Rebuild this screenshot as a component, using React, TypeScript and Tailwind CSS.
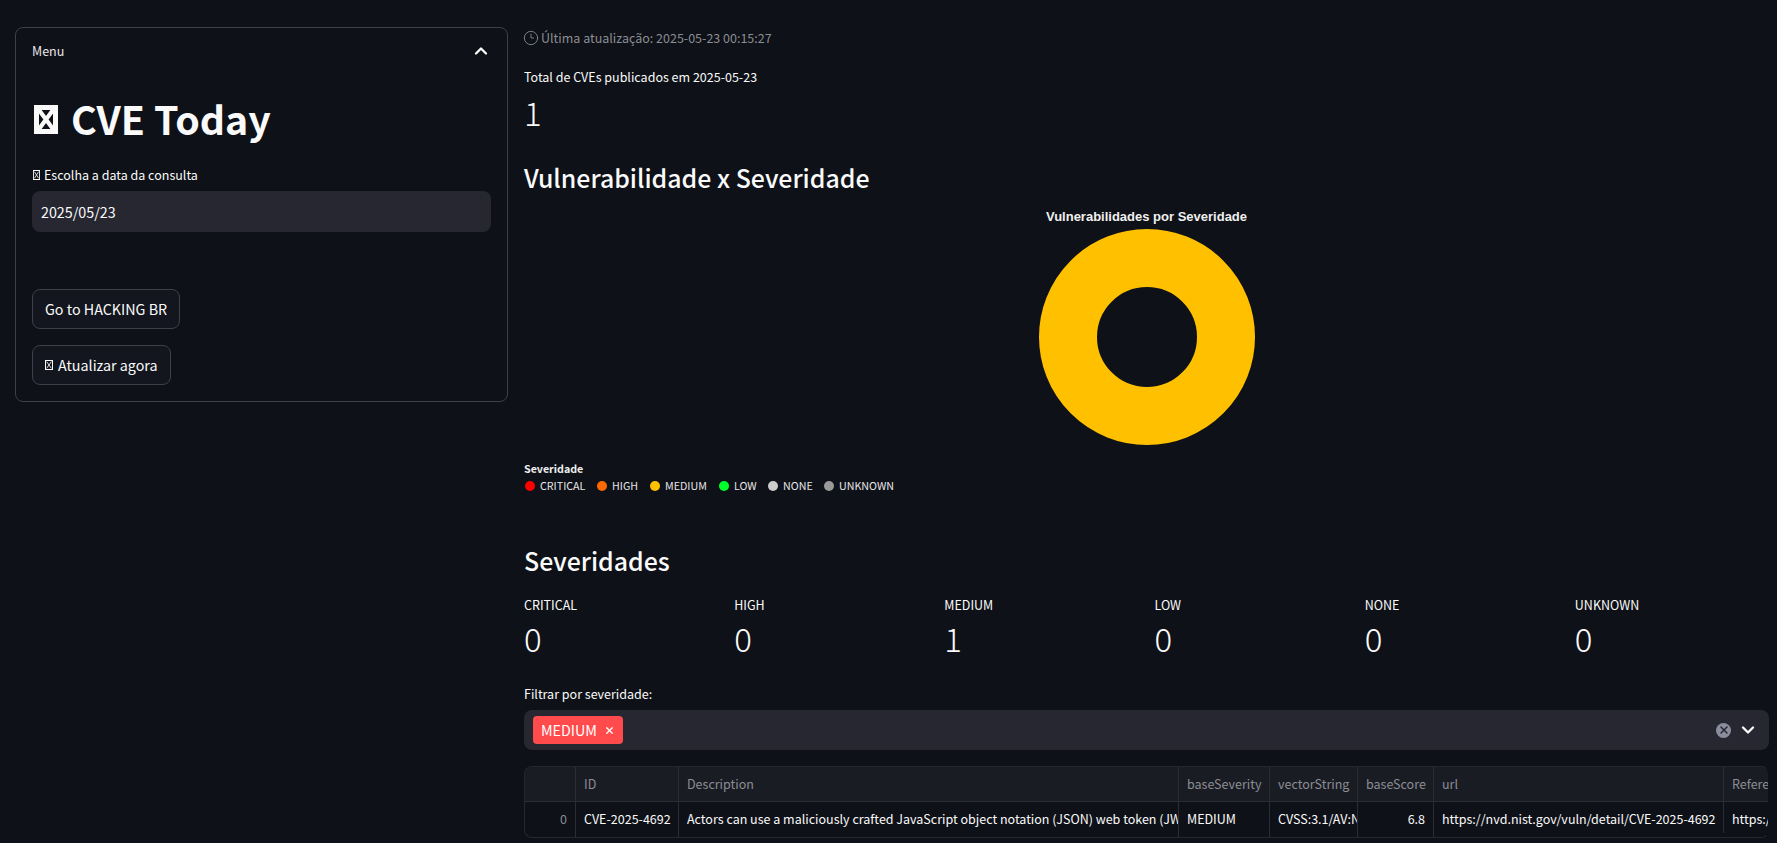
import { ChevronDown, ChevronUp, Clock3, X } from "lucide-react";

const SANS = "font-['Noto_Sans_CJK_SC','Noto_Sans',sans-serif]";

const LEGEND = [
  { label: "CRITICAL", color: "bg-[#ff0000]", width: "w-[72px]" },
  { label: "HIGH", color: "bg-[#ff6a00]", width: "w-[53px]" },
  { label: "MEDIUM", color: "bg-[#ffc000]", width: "w-[69px]" },
  { label: "LOW", color: "bg-[#00ff2a]", width: "w-[49px]" },
  { label: "NONE", color: "bg-[#cccccc]", width: "w-[56px]" },
  { label: "UNKNOWN", color: "bg-[#999999]", width: "w-auto" },
];

const METRICS = [
  { label: "CRITICAL", value: "0" },
  { label: "HIGH", value: "0" },
  { label: "MEDIUM", value: "1" },
  { label: "LOW", value: "0" },
  { label: "NONE", value: "0" },
  { label: "UNKNOWN", value: "0" },
];

const COLUMNS = [
  { head: "", cell: "0", className: "justify-end text-[#8b8d93]" },
  { head: "ID", cell: "CVE-2025-4692", className: "text-[#fafafa]" },
  {
    head: "Description",
    cell: "Actors can use a maliciously crafted JavaScript object notation (JSON) web token (JWT) to",
    className: "text-[#fafafa]",
  },
  { head: "baseSeverity", cell: "MEDIUM", className: "text-[#fafafa]" },
  { head: "vectorString", cell: "CVSS:3.1/AV:N/AC:L/PR:L", className: "text-[#fafafa]" },
  { head: "baseScore", cell: "6.8", className: "justify-end text-[#fafafa]" },
  { head: "url", cell: "https://nvd.nist.gov/vuln/detail/CVE-2025-4692", className: "text-[#fafafa]" },
  { head: "References", cell: "https://nvd.nist.gov/", className: "text-[#fafafa]" },
];

// missing-glyph box: the emoji in the reference did not render
function Tofu({ className, frame }: { className: string; frame: number }) {
  return (
    <svg viewBox="0 0 24 29" preserveAspectRatio="none" className={`inline-block ${className}`} aria-hidden="true">
      <path
        fillRule="evenodd"
        fill="currentColor"
        d={`M0 0H24V29H0Z M${frame} ${frame}V${29 - frame}H${24 - frame}V${frame}Z`}
      />
      <path d="M5 5L19 24M19 5L5 24" stroke="currentColor" strokeWidth={frame * 0.85} fill="none" />
    </svg>
  );
}

function Metric({ label, value }: { label: string; value: string }) {
  return (
    <div>
      <div className="text-[12.5px] leading-[20px] text-[#fafafa]">{label}</div>
      <div className="text-[33px] leading-[46px] font-light text-[#fafafa]">{value}</div>
    </div>
  );
}

function SecondaryButton({ children }: { children: React.ReactNode }) {
  return (
    <button
      type="button"
      className="h-[40px] flex items-center px-[12px] rounded-lg border border-[#3d4047] bg-[#13161e] text-[14.3px] text-[#fafafa]"
    >
      {children}
    </button>
  );
}

function Sidebar() {
  return (
    <aside className="w-[493px] shrink-0 h-[375px] rounded-lg border border-[#3d4047] px-4">
      <div className="flex items-center justify-between h-[46px]">
        <span className="text-[12.5px] text-[#e6e6e8]">Menu</span>
        <ChevronUp size={20} strokeWidth={2.8} className="text-[#fafafa]" />
      </div>
      <h1 className="mt-[17px] flex items-center gap-[13px] text-[39.3px] leading-[54px] font-bold text-[#fafafa]">
        <Tofu frame={5} className="ml-[2px] mt-[2px] w-[24px] h-[29px]" />
        CVE Today
      </h1>
      <label className="mt-[20px] flex items-center gap-[4px] text-[12.5px] leading-[20px] text-[#fafafa]">
        <Tofu frame={3} className="ml-[1px] w-[7px] h-[10px]" />
        Escolha a data da consulta
      </label>
      <div className="mt-[6px] h-[41px] flex items-center px-[9px] rounded-lg bg-[#262730] text-[14.3px] text-[#fafafa]">
        2025/05/23
      </div>
      <div className="mt-[57px] flex flex-col items-start gap-4">
        <SecondaryButton>Go to HACKING BR</SecondaryButton>
        <SecondaryButton>
          <Tofu frame={3} className="mr-[5px] w-[8px] h-[10px]" />
          Atualizar agora
        </SecondaryButton>
      </div>
    </aside>
  );
}

function DonutChart() {
  return (
    <div className="mt-[12px] h-[254px]">
      <div className="text-center pt-[2px] font-['Liberation_Sans',sans-serif] text-[13px] leading-[16px] font-bold text-[#f0f0f0]">
        Vulnerabilidades por Severidade
      </div>
      <svg viewBox="0 0 220 220" className="mx-auto mt-[2px] w-[220px] h-[220px]">
        <circle cx="110" cy="110" r="79" fill="none" stroke="#ffc000" strokeWidth="58" />
      </svg>
    </div>
  );
}

function DataTable() {
  return (
    <div className="relative h-[72px] overflow-hidden rounded-lg border border-[#26282f] border-r-transparent grid grid-cols-[51px_103px_500px_91px_88px_76px_290px_200px] grid-rows-[35px_35px] text-[12.5px]">
      {COLUMNS.map((col) => (
        <div
          key={col.head || "index"}
          className="h-[35px] flex items-center px-2 overflow-hidden whitespace-nowrap bg-[#1a1c24] border-r border-b border-[#2b2d35] text-[#8b8d93]"
        >
          {col.head}
        </div>
      ))}
      {COLUMNS.map((col) => (
        <div
          key={`cell-${col.head || "index"}`}
          className={`h-[35px] flex items-center px-2 overflow-hidden whitespace-nowrap border-r border-[#2b2d35] ${col.className}`}
        >
          <span className="shrink-0">{col.cell}</span>
        </div>
      ))}
      {/* hidden scrollbar track covers the corner */}
      <div className="absolute right-0 bottom-0 w-[60px] h-[4px] bg-[#0e1117]" />
    </div>
  );
}

export default function App() {
  return (
    <div className={`${SANS} h-[843px] w-[1777px] overflow-hidden bg-[#0e1117] flex gap-[16px] pl-[15px] pt-[27px]`}>
      <Sidebar />
      <main className="w-[1245px] shrink-0">
        <div className="mt-[1px] h-[20px] flex items-center gap-[2px] text-[12.5px] text-[#8b8d93]">
          <Clock3 size={16} strokeWidth={1.3} className="-ml-[1px]" />
          <span>Última atualização: 2025-05-23 00:15:27</span>
        </div>
        <div className="mt-[19px] text-[12.5px] leading-[20px] text-[#fafafa]">Total de CVEs publicados em 2025-05-23</div>
        <div className="mt-[2px] text-[33px] leading-[46px] font-light text-[#fafafa]">1</div>
        <h2 className="mt-[24px] text-[24.9px] leading-[36px] font-medium text-[#fafafa]">Vulnerabilidade x Severidade</h2>
        <DonutChart />
        <div className="text-[10.7px] leading-[16px] font-bold text-[#f0f0f0]">Severidade</div>
        <div className="ml-[1px] flex items-center h-[18px] text-[10.7px] text-[#e6e6e8]">
          {LEGEND.map((item) => (
            <div key={item.label} className={`shrink-0 flex items-center gap-[5px] ${item.width}`}>
              <span className={`w-[10px] h-[10px] rounded-full ${item.color}`} />
              <span>{item.label}</span>
            </div>
          ))}
        </div>
        <h2 className="mt-[47px] text-[24.9px] leading-[36px] font-medium text-[#fafafa]">Severidades</h2>
        <div className="mt-[17px] grid grid-cols-6 gap-4">
          {METRICS.map((m) => (
            <Metric key={m.label} label={m.label} value={m.value} />
          ))}
        </div>
        <label className="block mt-[23px] text-[12.5px] leading-[20px] text-[#fafafa]">Filtrar por severidade:</label>
        <div className="mt-[6px] h-[40px] flex items-center pl-[9px] pr-[11px] rounded-lg bg-[#262730]">
          <span className="h-[28px] w-[90px] flex items-center gap-[7px] px-[8px] rounded bg-[#ff4b4b] text-[14.3px] text-white">
            MEDIUM
            <X size={15} strokeWidth={2.8} />
          </span>
          <span className="ml-auto w-[15px] h-[15px] rounded-full bg-[#8b8d9f] flex items-center justify-center text-[#262730]">
            <X size={12} strokeWidth={3} />
          </span>
          <ChevronDown size={20} strokeWidth={2.8} className="ml-[7px] text-[#fafafa]" />
        </div>
        <div className="mt-4">
          <DataTable />
        </div>
      </main>
    </div>
  );
}
